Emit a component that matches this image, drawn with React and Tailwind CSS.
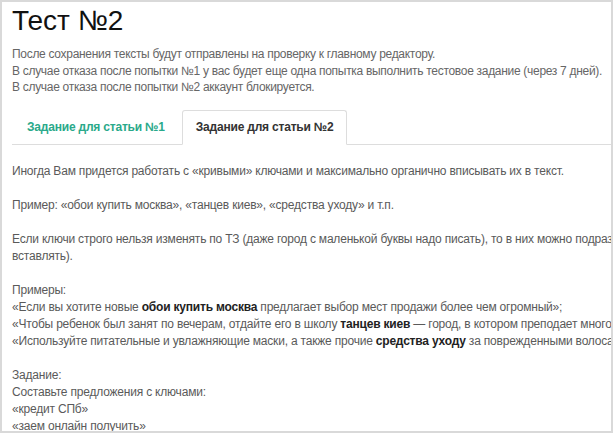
export default function App() {
  return (
    <div
      className="h-[433px] w-[613px] overflow-hidden border-2 border-[#d9d9d9] bg-white"
      style={{ fontFamily: '"Liberation Sans", Arial, sans-serif' }}
    >
      <div className="w-[900px] pl-[10px]">
        {/* Title */}
        <h1 className="pt-[2px] text-[28px] font-normal leading-[34px] text-[#111]">Тест №2</h1>

        {/* Intro */}
        <div className="mt-[8px] text-[12px] leading-[16.5px] tracking-[-0.3px] text-[#666]">
          <div>После сохранения тексты будут отправлены на проверку к главному редактору.</div>
          <div>В случае отказа после попытки №1 у вас будет еще одна попытка выполнить тестовое задание (через 7 дней).</div>
          <div>В случае отказа после попытки №2 аккаунт блокируется.</div>
        </div>

        {/* Tabs */}
        <div className="mt-[14px] flex border-b border-[#ddd] text-[12px] font-bold tracking-[-0.2px]">
          <div className="mr-[2px] -mb-px border border-transparent px-[14px] py-[9px] leading-[15px] text-[#2aa98a]">
            Задание для статьи №1
          </div>
          <div className="-mb-px rounded-t-[3px] border border-[#ddd] border-b-white bg-white px-[13px] py-[9px] leading-[15px] text-[#333]">
            Задание для статьи №2
          </div>
        </div>

        {/* Tab content */}
        <div className="mt-[18px] whitespace-nowrap text-[12px] leading-[17px] tracking-[-0.2px] text-[#5a5a5a]">
          <p>Иногда Вам придется работать с «кривыми» ключами и максимально органично вписывать их в текст.</p>
          <p className="mt-[17px]">Пример: «обои купить москва», «танцев киев», «средства уходу» и т.п.</p>
          <p className="mt-[17px]">
            Если ключи строго нельзя изменять по ТЗ (даже город с маленькой буквы надо писать), то в них можно подразумевать знаки препинания (но не
            <br />
            вставлять).
          </p>
          <p className="mt-[17px]">
            Примеры:
            <br />
            «Если вы хотите новые <b className="text-[#222]">обои купить москва</b> предлагает выбор мест продажи более чем огромный»;
            <br />
            «Чтобы ребенок был занят по вечерам, отдайте его в школу <b className="text-[#222]">танцев киев</b> — город, в котором преподает много талантливых хореографов»;
            <br />
            «Используйте питательные и увлажняющие маски, а также прочие <b className="text-[#222]">средства уходу</b> за поврежденными волосами».
          </p>
          <p className="mt-[17px]">
            Задание:
            <br />
            Составьте предложения с ключами:
            <br />
            «кредит СПб»
            <br />
            «заем онлайн получить»
            <br />
            «аренда авто Ростов»
          </p>
        </div>
      </div>
    </div>
  );
}
